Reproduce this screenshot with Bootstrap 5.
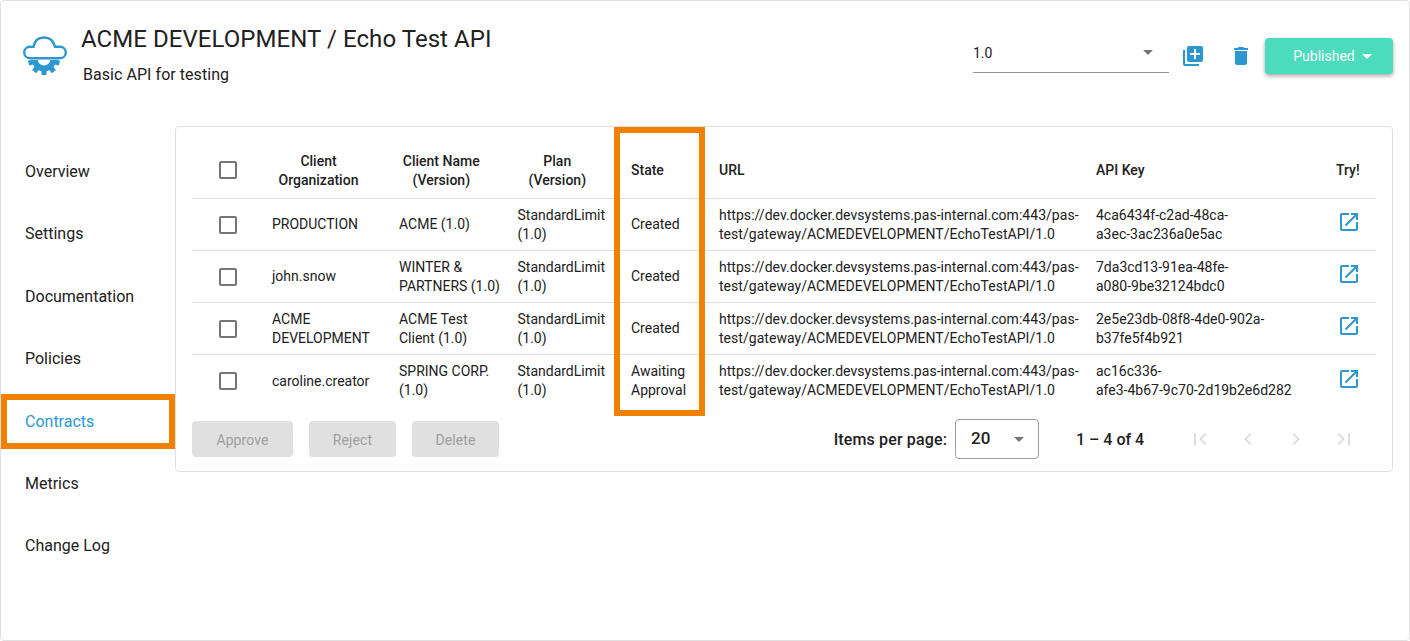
<!DOCTYPE html>
<html lang="en">
<head>
  <meta charset="UTF-8">
  <title>Echo Test API - Contracts</title>
  <link rel="stylesheet" href="https://cdn.jsdelivr.net/npm/bootstrap@5.3.0/dist/css/bootstrap.min.css">
  <style>
    body { font-family: Roboto, "Liberation Sans", sans-serif; color: #212121; background: #fff; }
    .page-frame { width: 1410px; height: 641px; border: 1px solid #e0e0e0; border-radius: 4px; overflow: hidden; }
    .top-bar { height: 125px; padding: 24px 16px 0 22px; }
    .app-logo { width: 44px; height: 40px; margin-top: 11px; margin-right: 14px; flex: none; }
    .api-title { font-size: 24px; line-height: 28px; font-weight: 400; margin: 0; letter-spacing: .06px; }
    .api-sub { font-size: 16px; line-height: 20px; margin: 12px 0 0 2px; letter-spacing: .05px; }
    .version-pick { width: 196px; height: 36px; margin-top: 12px; margin-right: 1px; border-bottom: 1px solid #949494; font-size: 14px; padding-bottom: 4px; line-height: 26px; }
    .caret-down { width: 0; height: 0; border-left: 5px solid transparent; border-right: 5px solid transparent; border-top: 5px solid #757575; }
    .version-pick .caret-down { margin-right: 16px; }
    .act-icon { width: 24px; height: 24px; fill: #2d98d0; margin-top: 19px; flex: none; }
    .act-one { margin-left: 11px; }
    .act-two { margin-left: 24px; }
    .status-btn { width: 128px; height: 36px; margin: 13px 0 0 12px; padding: 0 0 0 7px; background: #4bdbbd; color: #fff; border: 0; border-radius: 4px; font-size: 14px; box-shadow: 0 2px 4px rgba(0,0,0,.35); }
    .status-btn .caret-down { border-top-color: #fff; margin-left: 7px; }
    .side-menu { width: 174px; padding-top: 14px; flex: none; }
    .side-item { position: relative; height: 62.4px; line-height: 64.4px; padding-left: 24px; font-size: 16px; color: #212121; text-decoration: none; display: block; }
    .side-item.is-on { color: #2d98d0; }
    .mark-box { position: absolute; border: 6px solid #f08000; pointer-events: none; }
    .mark-side { left: 0; top: 4.4px; width: 174px; height: 55px; }
    .mark-state { left: 438px; top: 0; width: 91px; height: 289px; }
    .contract-card { position: relative; width: 1218px; height: 346px; border: 1px solid #e0e0e0; border-radius: 4px; padding: 15px 16px; }
    .contract-table { width: 1184px; table-layout: fixed; font-size: 14px; line-height: 19px; margin: 0; }
    .contract-table th, .contract-table td { padding: 0 8px; vertical-align: middle; border-bottom: 1px solid #e0e0e0; color: #212121; box-shadow: none; }
    .contract-table th { height: 56px; padding-top: 2px; font-weight: 500; }
    .contract-table th.text-center { padding-right: 26px; }
    .contract-table td { height: 52px; }
    .contract-table td.line-pair, .contract-table tr:last-child td:not(.col-check) { padding-top: 2px; }
    .contract-table tr:last-child td { border-bottom: 0; }
    .col-check { width: 72px; text-align: center; }
    .col-org { width: 127px; }
    .col-name { width: 118.5px; }
    .col-plan { width: 113.5px; }
    .col-state { width: 88px; }
    .col-url { width: 377px; }
    .col-key { width: 240px; }
    .col-try { width: 48px; }
    .url-text { letter-spacing: .035px; }
    .tick-box { width: 18px; height: 18px; border: 2px solid #757575; border-radius: 2px; margin: 3px 0 0; display: inline-block; }
    td .tick-box { margin-top: 7px; }
    .try-icon { width: 24px; height: 24px; fill: #2d98d0; margin: -4px 0 0 .5px; }
    .card-foot { height: 36px; margin-top: 15px; }
    .off-btn { height: 36px; background: #e0e0e0; color: #9e9e9e; border: 0; border-radius: 4px; font-size: 14px; margin-right: 16px; padding: 2px 0 0; letter-spacing: .1px; }
    .btn-approve { width: 101px; }
    .btn-reject, .btn-delete { width: 87px; }
    .pager-label { font-size: 16px; font-weight: 500; margin-right: 8px; padding-top: 1px; letter-spacing: .14px; }
    .pager-pick { width: 84px; height: 40px; border: 1px solid #9e9e9e; border-radius: 4px; padding: 0 14px 0 15px; font-size: 17px; font-weight: 500; }
    .pager-range { font-size: 16px; font-weight: 500; width: 112px; margin-left: 37px; padding-top: 1px; }
    .pager-icon { width: 24px; height: 24px; fill: #dedede; margin-right: 24px; }
    .pager-icon:last-child { margin-right: 20px; }
  </style>
</head>
<body>
  <div class="page-frame">
    <div class="top-bar d-flex align-items-start">
      <svg class="app-logo" viewBox="0 0 44 40">
        <defs><clipPath id="gearClip"><rect x="0" y="24" width="44" height="16"/></clipPath></defs>
        <path d="M7 22.200C3.500 22.200 1.200 19.500 1.200 16.500S3.500 10.800 7 10.800H10.500C11.500 5 15.500 1.500 21 1.500S30.500 5 32 10.800H37C40.500 10.800 42.800 13.500 42.800 16.500S40.500 22.200 37 22.200Z" fill="none" stroke="#2d98d0" stroke-width="2.400"/>
        <g clip-path="url(#gearClip)" fill="#2d98d0">
          <circle cx="21" cy="23" r="9.500" fill="none" stroke="#2d98d0" stroke-width="6"/>
          <rect x="31" y="20.500" width="6" height="5" transform="rotate(15 21 23)"/>
          <rect x="31" y="20.500" width="6" height="5" transform="rotate(52 21 23)"/>
          <rect x="31" y="20.500" width="6" height="5" transform="rotate(90 21 23)"/>
          <rect x="31" y="20.500" width="6" height="5" transform="rotate(128 21 23)"/>
          <rect x="31" y="20.500" width="6" height="5" transform="rotate(165 21 23)"/>
        </g>
      </svg>
      <div class="flex-grow-1">
        <h1 class="api-title">ACME DEVELOPMENT / Echo Test API</h1>
        <p class="api-sub">Basic API for testing</p>
      </div>
      <div class="version-pick d-flex justify-content-between align-items-center">
        <span>1.0</span><span class="caret-down"></span>
      </div>
      <svg class="act-icon act-one" viewBox="0 0 24 24"><path d="M4 6H2v14c0 1.100.9 2 2 2h14v-2H4V6zm16-4H8c-1.100 0-2 .9-2 2v12c0 1.100.9 2 2 2h12c1.100 0 2-.9 2-2V4c0-1.100-.9-2-2-2zm-1 9h-4v4h-2v-4H9V9h4V5h2v4h4v2z"/></svg>
      <svg class="act-icon act-two" viewBox="0 0 24 24"><path d="M6 19c0 1.100.9 2 2 2h8c1.100 0 2-.9 2-2V7H6v12zM19 4h-3.500l-1-1h-5l-1 1H5v2h14V4z"/></svg>
      <button class="status-btn d-flex align-items-center justify-content-center" type="button">Published<span class="caret-down"></span></button>
    </div>

    <div class="d-flex">
      <nav class="side-menu">
        <a class="side-item" href="#">Overview</a>
        <a class="side-item" href="#">Settings</a>
        <a class="side-item" href="#">Documentation</a>
        <a class="side-item" href="#">Policies</a>
        <a class="side-item is-on" href="#">Contracts<span class="mark-box mark-side"></span></a>
        <a class="side-item" href="#">Metrics</a>
        <a class="side-item" href="#">Change Log</a>
      </nav>

      <div class="contract-card">
        <table class="table contract-table">
          <thead>
            <tr>
              <th class="col-check"><span class="tick-box"></span></th>
              <th class="col-org text-center">Client Organization</th>
              <th class="col-name text-center">Client Name (Version)</th>
              <th class="col-plan text-center">Plan (Version)</th>
              <th class="col-state">State</th>
              <th class="col-url">URL</th>
              <th class="col-key">API Key</th>
              <th class="col-try">Try!</th>
            </tr>
          </thead>
          <tbody>
            <tr>
              <td class="col-check"><span class="tick-box"></span></td>
              <td>PRODUCTION</td>
              <td>ACME (1.0)</td>
              <td class="line-pair">StandardLimit (1.0)</td>
              <td>Created</td>
              <td class="line-pair url-text">https://dev.docker.devsystems.pas-internal.com:443/pas-test/gateway/ACMEDEVELOPMENT/EchoTestAPI/1.0</td>
              <td class="line-pair">4ca6434f-c2ad-48ca-<br>a3ec-3ac236a0e5ac</td>
              <td><svg class="try-icon" viewBox="0 0 24 24"><path d="M19 19H5V5h7V3H5c-1.110 0-2 .9-2 2v14c0 1.100.89 2 2 2h14c1.100 0 2-.9 2-2v-7h-2v7zM14 3v2h3.590l-9.830 9.830 1.410 1.410L19 6.410V10h2V3h-7z"/></svg></td>
            </tr>
            <tr>
              <td class="col-check"><span class="tick-box"></span></td>
              <td>john.snow</td>
              <td class="line-pair">WINTER &amp; PARTNERS (1.0)</td>
              <td class="line-pair">StandardLimit (1.0)</td>
              <td>Created</td>
              <td class="line-pair url-text">https://dev.docker.devsystems.pas-internal.com:443/pas-test/gateway/ACMEDEVELOPMENT/EchoTestAPI/1.0</td>
              <td class="line-pair">7da3cd13-91ea-48fe-<br>a080-9be32124bdc0</td>
              <td><svg class="try-icon" viewBox="0 0 24 24"><path d="M19 19H5V5h7V3H5c-1.110 0-2 .9-2 2v14c0 1.100.89 2 2 2h14c1.100 0 2-.9 2-2v-7h-2v7zM14 3v2h3.590l-9.830 9.830 1.410 1.410L19 6.410V10h2V3h-7z"/></svg></td>
            </tr>
            <tr>
              <td class="col-check"><span class="tick-box"></span></td>
              <td class="line-pair">ACME DEVELOPMENT</td>
              <td class="line-pair">ACME Test Client (1.0)</td>
              <td class="line-pair">StandardLimit (1.0)</td>
              <td>Created</td>
              <td class="line-pair url-text">https://dev.docker.devsystems.pas-internal.com:443/pas-test/gateway/ACMEDEVELOPMENT/EchoTestAPI/1.0</td>
              <td class="line-pair">2e5e23db-08f8-4de0-902a-<br>b37fe5f4b921</td>
              <td><svg class="try-icon" viewBox="0 0 24 24"><path d="M19 19H5V5h7V3H5c-1.110 0-2 .9-2 2v14c0 1.100.89 2 2 2h14c1.100 0 2-.9 2-2v-7h-2v7zM14 3v2h3.590l-9.830 9.830 1.410 1.410L19 6.410V10h2V3h-7z"/></svg></td>
            </tr>
            <tr>
              <td class="col-check"><span class="tick-box"></span></td>
              <td>caroline.creator</td>
              <td>SPRING CORP. (1.0)</td>
              <td>StandardLimit (1.0)</td>
              <td>Awaiting Approval</td>
              <td class="url-text">https://dev.docker.devsystems.pas-internal.com:443/pas-test/gateway/ACMEDEVELOPMENT/EchoTestAPI/1.0</td>
              <td>ac16c336-<br>afe3-4b67-9c70-2d19b2e6d282</td>
              <td><svg class="try-icon" viewBox="0 0 24 24"><path d="M19 19H5V5h7V3H5c-1.110 0-2 .9-2 2v14c0 1.100.89 2 2 2h14c1.100 0 2-.9 2-2v-7h-2v7zM14 3v2h3.590l-9.830 9.830 1.410 1.410L19 6.410V10h2V3h-7z"/></svg></td>
            </tr>
          </tbody>
        </table>

        <div class="card-foot d-flex align-items-center">
          <button class="off-btn btn-approve" type="button">Approve</button>
          <button class="off-btn btn-reject" type="button">Reject</button>
          <button class="off-btn btn-delete" type="button">Delete</button>
          <div class="ms-auto d-flex align-items-center">
            <span class="pager-label">Items per page:</span>
            <div class="pager-pick d-flex justify-content-between align-items-center"><span>20</span><span class="caret-down"></span></div>
            <span class="pager-range">1 – 4 of 4</span>
            <svg class="pager-icon" viewBox="0 0 24 24"><path d="M18.410 16.590L13.820 12l4.590-4.590L17 6l-6 6 6 6zM6 6h2v12H6z"/></svg>
            <svg class="pager-icon" viewBox="0 0 24 24"><path d="M15.410 7.410L14 6l-6 6 6 6 1.410-1.410L10.830 12z"/></svg>
            <svg class="pager-icon" viewBox="0 0 24 24"><path d="M10 6L8.590 7.410 13.170 12l-4.580 4.590L10 18l6-6z"/></svg>
            <svg class="pager-icon" viewBox="0 0 24 24"><path d="M5.590 7.410L10.180 12l-4.590 4.590L7 18l6-6-6-6zM16 6h2v12h-2z"/></svg>
          </div>
        </div>
        <span class="mark-box mark-state"></span>
      </div>
    </div>
  </div>
  <script src="https://cdn.jsdelivr.net/npm/bootstrap@5.3.0/dist/js/bootstrap.bundle.min.js"></script>
</body>
</html>
